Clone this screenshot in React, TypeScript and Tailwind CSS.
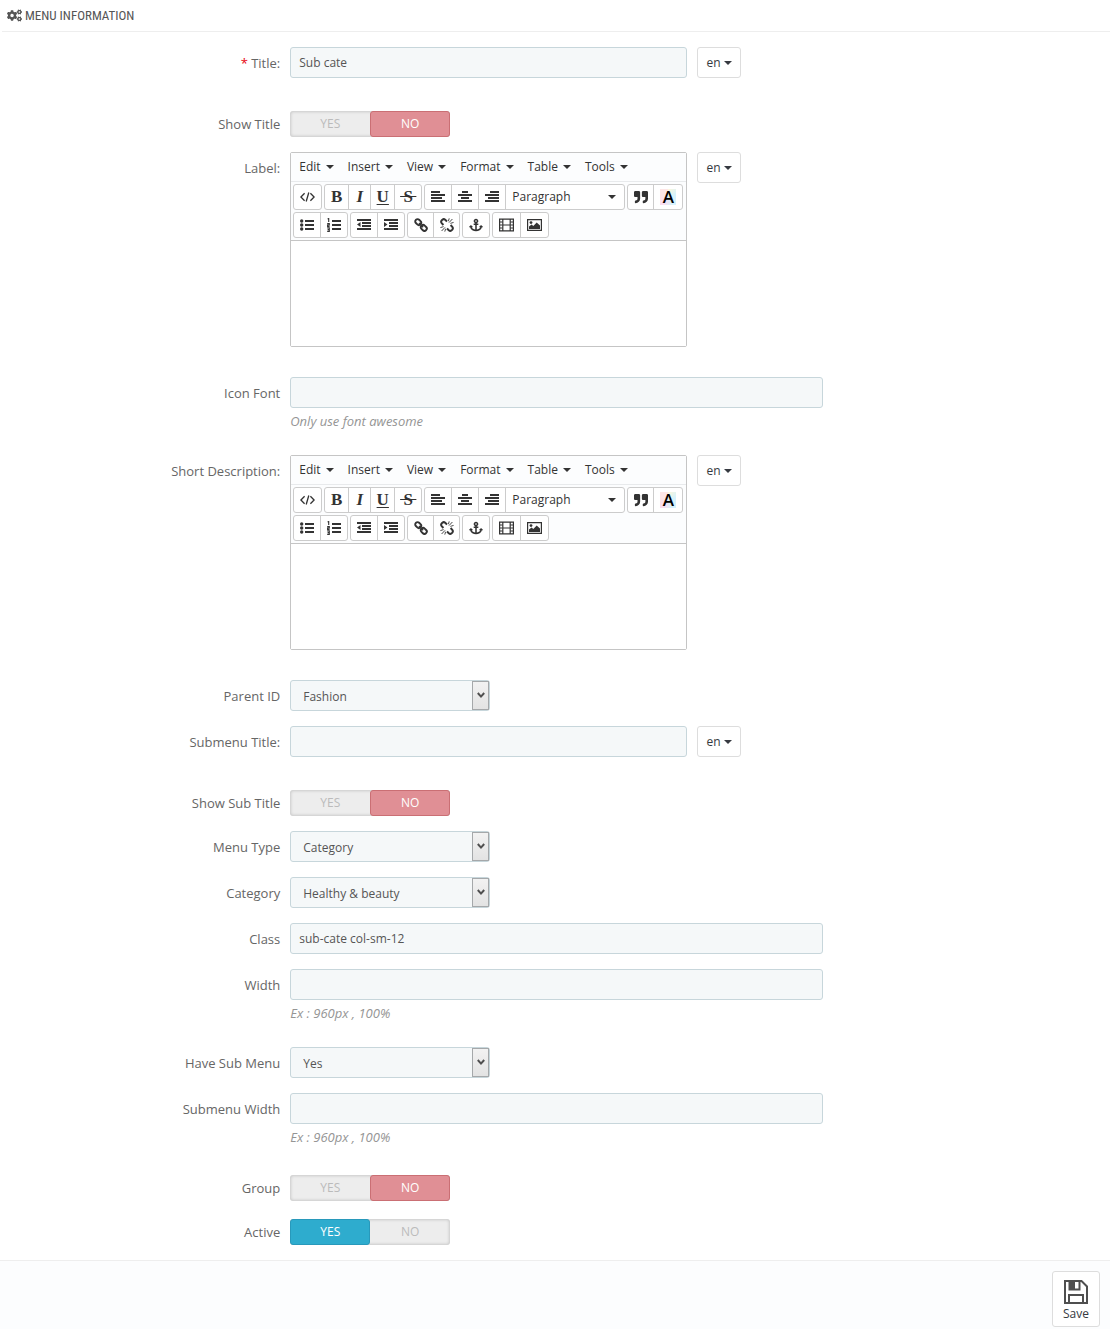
import React, { useState } from "react";
import { FaAnchor, FaCogs, FaQuoteRight } from "react-icons/fa";

/* ---------- Icons ---------- */

const Caret = () => (
  <svg width="8" height="4" viewBox="0 0 8 4" fill="currentColor" aria-hidden="true">
    <path d="M0 0h8L4 4z" />
  </svg>
);

const Icon = ({ children }: { children: React.ReactNode }) => (
  <svg width="14" height="14" viewBox="0 0 14 14" fill="currentColor" aria-hidden="true">
    {children}
  </svg>
);

const CodeIcon = () => (
  <svg width="15" height="14" viewBox="0 0 15 14" fill="none" stroke="currentColor" strokeWidth="1.3" aria-hidden="true">
    <path d="M4.6 3.2L.9 7l3.7 3.8M10.4 3.2L14.1 7l-3.7 3.8M8.8 2.5L6.2 11.5" />
  </svg>
);

const AlignLeftIcon = () => (
  <Icon>
    <path d="M0 1h9v2H0zM0 4h14v2H0zM0 7h11v2H0zM0 10h14v2H0z" />
  </Icon>
);

const AlignCenterIcon = () => (
  <Icon>
    <path d="M4 1h6v2H4zM0 4h14v2H0zM3 7h8v2H3zM0 10h14v2H0z" />
  </Icon>
);

const AlignRightIcon = () => (
  <Icon>
    <path d="M5 1h9v2H5zM0 4h14v2H0zM3 7h11v2H3zM0 10h14v2H0z" />
  </Icon>
);

const BulletsIcon = () => (
  <Icon>
    <path d="M5 2h9v2H5zM5 6h9v2H5zM5 10h9v2H5z" />
    <circle cx="1.7" cy="3" r="1.7" />
    <circle cx="1.7" cy="7" r="1.7" />
    <circle cx="1.7" cy="11" r="1.7" />
  </Icon>
);

const NumbersIcon = () => (
  <Icon>
    <path d="M5 2h9v2H5zM5 6h9v2H5zM5 10h9v2H5z" />
    <path
      d="M.6 1L1.7.5v3.4M.2 5.5h2.1v1.4H.6v1.5h2M.2 9.9h2.1v3.5H.2M.6 11.6h1.7"
      fill="none"
      stroke="currentColor"
      strokeWidth="1.1"
    />
  </Icon>
);

const OutdentIcon = () => (
  <Icon>
    <path d="M0 1h14v2H0zM5 4h9v2H5zM5 7h9v2H5zM0 10h14v2H0zM3.5 4v5L0 6.5z" />
  </Icon>
);

const IndentIcon = () => (
  <Icon>
    <path d="M0 1h14v2H0zM5 4h9v2H5zM5 7h9v2H5zM0 10h14v2H0zM0 4v5l3.5-2.5z" />
  </Icon>
);

const LinkIcon = () => (
  <Icon>
    <g fill="none" stroke="currentColor" strokeWidth="1.9">
      <rect x="1" y="1.8" width="6.4" height="4.6" rx="2.2" transform="rotate(45 4.2 4.1)" />
      <rect x="6.6" y="7.6" width="6.4" height="4.6" rx="2.2" transform="rotate(45 9.8 9.9)" />
      <path d="M5 5l4.2 4.2" strokeWidth="1.5" />
    </g>
  </Icon>
);

const UnlinkIcon = () => (
  <Icon>
    <g fill="none" stroke="currentColor" strokeWidth="2">
      <path d="M3.4 7L1.7 5.2a2.2 2.2 0 010-2.8l.7-.7a2.2 2.2 0 012.8 0L7 3.4M10.6 7l1.7 1.8a2.2 2.2 0 010 2.8l-.7.7a2.2 2.2 0 01-2.8 0L7 10.6" />
      <path
        d="M9 4.6L12.4 1M10.4 5.4l3.2-1M8.4 3.2l.8-2.8M5 9.4L1.6 13M3.6 8.6l-3.2 1M5.6 10.8l-.8 2.8"
        strokeWidth="0.9"
      />
    </g>
  </Icon>
);

const MediaIcon = () => (
  <svg width="15" height="14" viewBox="0 0 15 14" fill="none" stroke="currentColor" aria-hidden="true">
    <path d="M.6 1.1h13.8v11.8H.6zM3.8 1v12M11.2 1v12M4 7h7" strokeWidth="1.2" />
    <path d="M.6 4h3M.6 7h3M.6 10h3M11.4 4h3M11.4 7h3M11.4 10h3" />
  </svg>
);

const ImageIcon = () => (
  <svg width="15" height="14" viewBox="0 0 15 14" fill="currentColor" aria-hidden="true">
    <path d="M.6 1.6h13.8v10.8H.6z" fill="none" stroke="currentColor" strokeWidth="1.2" />
    <circle cx="4" cy="4.6" r="1.4" />
    <path d="M2 11V8.6L4.6 6.6l1.7 1.3 3.4-3.5L13 7.6V11z" />
  </svg>
);

const TextColorIcon = () => (
  <span className="flex h-4 w-4 items-center justify-center bg-[conic-gradient(#fff7d8,#d5f2fc,#d5f2fc,#fbdcef,#fde6e6,#fde6e6)] font-['Open_Sans',sans-serif] text-[17px] leading-4 font-semibold text-black">
    A
  </span>
);

const SaveIcon = () => (
  <svg width="24" height="24" viewBox="0 0 24 24" fill="none" stroke="#4f4f4f" strokeWidth="2" aria-hidden="true">
    <path d="M1 1h16.5L23 6.5V23H1z" />
    <path d="M5 23v-8h14v8M5.5 1v8.5h10V1" />
    <path d="M5 1h6v8H5z" fill="#4f4f4f" stroke="none" />
  </svg>
);

/* ---------- Form pieces ---------- */

const inputClass =
  "h-[31px] w-full rounded-[3px] border border-[#c7d6db] bg-[#f5f8f9] px-2 text-xs text-[#555] outline-none";

type RowProps = {
  label: string;
  htmlFor?: string;
  required?: boolean;
  spacing?: string;
  children: React.ReactNode;
};

const Row = ({ label, htmlFor, required, spacing = "mb-[15px]", children }: RowProps) => (
  <div className={`flex items-start ${spacing}`}>
    <label
      htmlFor={htmlFor}
      id={htmlFor ? `${htmlFor}-label` : undefined}
      className="w-1/4 pt-[7px] pr-[5px] text-right text-[13px] leading-[18px] text-[#666]"
    >
      {required && <span className="text-red-600">* </span>}
      {label}
    </label>
    <div className="flex w-3/4 items-start">{children}</div>
  </div>
);

const LangButton = () => (
  <button
    type="button"
    className="ml-[5px] flex h-[31px] w-11 items-center justify-center gap-[3px] rounded-[3px] border border-[#ddd] bg-white text-xs text-[#363a41]"
  >
    en <Caret />
  </button>
);

const TextField = ({ id, value = "", help }: { id: string; value?: string; help?: string }) => (
  <div className="w-2/3 px-[5px]">
    <input id={id} type="text" defaultValue={value} className={inputClass} />
    {help && <p className="mt-[5px] mb-[10px] text-[13px] leading-[17px] text-[#959595] italic">{help}</p>}
  </div>
);

const LangField = ({ id, value = "" }: { id: string; value?: string }) => (
  <>
    <div className="w-1/2 px-[5px]">
      <input id={id} type="text" defaultValue={value} className={inputClass} />
    </div>
    <LangButton />
  </>
);

const SelectField = ({ id, options }: { id: string; options: string[] }) => (
  <div className="px-[5px]">
    <div className="relative w-[200px]">
      <select
        id={id}
        className="h-[31px] w-full appearance-none rounded-[3px] border border-[#c7d6db] bg-[#f5f8f9] pt-[2px] pr-5 pl-3 text-xs text-[#555] outline-none"
      >
        {options.map((option) => (
          <option key={option}>{option}</option>
        ))}
      </select>
      <span className="pointer-events-none absolute inset-y-px right-px flex w-[17px] items-center justify-center border border-[#a5a8aa] bg-linear-to-b from-[#f2f2f2] to-[#e3e3e3]">
        <svg width="8" height="7" viewBox="0 0 8 7" fill="none" stroke="#505050" strokeWidth="2" aria-hidden="true">
          <path d="M.8 1L4 4.6 7.2 1" />
        </svg>
      </span>
    </div>
  </div>
);

const Switch = ({ id, initial }: { id: string; initial: "YES" | "NO" }) => {
  const [value, setValue] = useState(initial);

  const stateClass = (option: "YES" | "NO") => {
    if (option !== value) return "border-transparent text-[#bbb]";
    return option === "YES"
      ? "border-[#2899bb] bg-[#2eacce] text-white"
      : "border-[#ca6f74] bg-[#e08f95] text-white";
  };

  return (
    <div className="px-[5px] pt-[3px]">
      <div
        role="radiogroup"
        aria-labelledby={`${id}-label`}
        className="flex h-[26px] w-40 rounded-[3px] bg-[#ededed] shadow-[inset_0_0_3px_1px_rgba(0,0,0,0.15)]"
      >
        {(["YES", "NO"] as const).map((option) => (
          <label
            key={option}
            className={`flex w-1/2 items-center justify-center rounded-[3px] border text-xs ${stateClass(option)}`}
          >
            <input
              id={option === "YES" ? id : undefined}
              type="radio"
              name={id}
              className="sr-only"
              checked={option === value}
              onChange={() => setValue(option)}
            />
            {option}
          </label>
        ))}
      </div>
    </div>
  );
};

/* ---------- Rich text editor ---------- */

const ToolGroup = ({ children }: { children: React.ReactNode }) => (
  <div className="flex h-[26px] divide-x divide-[#ccc] rounded-[3px] border border-[#ccc] bg-white">{children}</div>
);

const Tool = ({ title, width = "w-[27px]", children }: { title: string; width?: string; children: React.ReactNode }) => (
  <button
    type="button"
    title={title}
    className={`flex items-center justify-center font-['Liberation_Serif',serif] text-[17px] leading-4 ${width}`}
  >
    {children}
  </button>
);

const menus = ["Edit", "Insert", "View", "Format", "Table", "Tools"];

const Editor = ({ id }: { id: string }) => (
  <>
    <div className="w-1/2 px-[5px]">
      <div className="rounded-xs border border-[#c5c5c5] text-[#333]">
        <div className="flex h-[29px] items-center gap-[14px] border-b border-[#e8eaec] bg-[#fcfdfe] px-2">
          {menus.map((menu) => (
            <button key={menu} type="button" className="flex items-center gap-[5px] text-xs">
              {menu} <Caret />
            </button>
          ))}
        </div>
        <div className="flex flex-wrap gap-[2px] border-b border-[#c5c5c5] bg-[#fcfdfe] p-[2px]">
          <ToolGroup>
            <Tool title="Source code"><CodeIcon /></Tool>
          </ToolGroup>
          <ToolGroup>
            <Tool title="Bold" width="w-6"><b>B</b></Tool>
            <Tool title="Italic" width="w-[22px]"><b className="italic">I</b></Tool>
            <Tool title="Underline" width="w-6"><b className="font-semibold underline underline-offset-2">U</b></Tool>
            <Tool title="Strikethrough" width="w-[26px]"><s className="font-semibold">{"\u2009S\u2009"}</s></Tool>
          </ToolGroup>
          <ToolGroup>
            <Tool title="Align left"><AlignLeftIcon /></Tool>
            <Tool title="Align center"><AlignCenterIcon /></Tool>
            <Tool title="Align right"><AlignRightIcon /></Tool>
            <button type="button" className="flex w-[118px] items-center justify-between pr-2 pl-[6px] text-xs">
              Paragraph <Caret />
            </button>
          </ToolGroup>
          <ToolGroup>
            <Tool title="Blockquote" width="w-[26px]"><FaQuoteRight size={14} /></Tool>
            <Tool title="Text color" width="w-7"><TextColorIcon /></Tool>
          </ToolGroup>
          <div className="flex w-full gap-[2px]">
            <ToolGroup>
              <Tool title="Bullet list"><BulletsIcon /></Tool>
              <Tool title="Numbered list" width="w-[26px]"><NumbersIcon /></Tool>
            </ToolGroup>
            <ToolGroup>
              <Tool title="Decrease indent"><OutdentIcon /></Tool>
              <Tool title="Increase indent" width="w-[26px]"><IndentIcon /></Tool>
            </ToolGroup>
            <ToolGroup>
              <Tool title="Insert link" width="w-[26px]"><LinkIcon /></Tool>
              <Tool title="Remove link" width="w-[25px]"><UnlinkIcon /></Tool>
            </ToolGroup>
            <ToolGroup>
              <Tool title="Anchor" width="w-[26px]"><FaAnchor size={14} /></Tool>
            </ToolGroup>
            <ToolGroup>
              <Tool title="Insert video" width="w-7"><MediaIcon /></Tool>
              <Tool title="Insert image"><ImageIcon /></Tool>
            </ToolGroup>
          </div>
        </div>
        <textarea id={id} className="block h-[105px] w-full resize-none bg-white p-2 text-xs outline-none" />
      </div>
    </div>
    <LangButton />
  </>
);

/* ---------- Page ---------- */

const App: React.FC = () => {
  return (
    <form className="flex min-h-screen flex-col bg-white font-['Open_Sans',sans-serif]">
      <h3 className="ml-[2px] flex h-8 items-center gap-[3px] border-b border-[#eee] pl-[5px] font-['Ubuntu_Condensed','Roboto_Condensed','Open_Sans_Condensed','Noto_Sans_Condensed',Roboto,sans-serif] text-[13px] text-[#555]">
        <FaCogs size={15} />
        MENU INFORMATION
      </h3>

      <div className="pt-[15px] pr-[11px] pl-[14px]">
        <Row label="Title:" htmlFor="title" required spacing="mb-[30px]">
          <LangField id="title" value="Sub cate" />
        </Row>
        <Row label="Show Title" htmlFor="show-title">
          <Switch id="show-title" initial="NO" />
        </Row>
        <Row label="Label:" htmlFor="label" spacing="mb-[30px]">
          <Editor id="label" />
        </Row>
        <Row label="Icon Font" htmlFor="icon-font">
          <TextField id="icon-font" help="Only use font awesome" />
        </Row>
        <Row label="Short Description:" htmlFor="description" spacing="mb-[30px]">
          <Editor id="description" />
        </Row>
        <Row label="Parent ID" htmlFor="parent">
          <SelectField id="parent" options={["Fashion"]} />
        </Row>
        <Row label="Submenu Title:" htmlFor="submenu-title" spacing="mb-[30px]">
          <LangField id="submenu-title" />
        </Row>
        <Row label="Show Sub Title" htmlFor="show-sub-title">
          <Switch id="show-sub-title" initial="NO" />
        </Row>
        <Row label="Menu Type" htmlFor="menu-type">
          <SelectField id="menu-type" options={["Category"]} />
        </Row>
        <Row label="Category" htmlFor="category">
          <SelectField id="category" options={["Healthy & beauty"]} />
        </Row>
        <Row label="Class" htmlFor="class">
          <TextField id="class" value="sub-cate col-sm-12" />
        </Row>
        <Row label="Width" htmlFor="width">
          <TextField id="width" help="Ex : 960px , 100%" />
        </Row>
        <Row label="Have Sub Menu" htmlFor="have-submenu">
          <SelectField id="have-submenu" options={["Yes", "No"]} />
        </Row>
        <Row label="Submenu Width" htmlFor="submenu-width" spacing="mb-4">
          <TextField id="submenu-width" help="Ex : 960px , 100%" />
        </Row>
        <Row label="Group" htmlFor="group">
          <Switch id="group" initial="NO" />
        </Row>
        <Row label="Active" htmlFor="active">
          <Switch id="active" initial="YES" />
        </Row>
      </div>

      <div className="flex grow items-start justify-end border-t border-[#eee] bg-[#fcfdfe] pt-[10px] pr-[10px] pb-[2px]">
        <button
          type="submit"
          className="flex h-14 w-12 flex-col items-center gap-[2px] rounded-[3px] border border-[#ddd] bg-white pt-2 text-xs leading-4 text-[#363a41]"
        >
          <SaveIcon />
          Save
        </button>
      </div>
    </form>
  );
};

export default App;
